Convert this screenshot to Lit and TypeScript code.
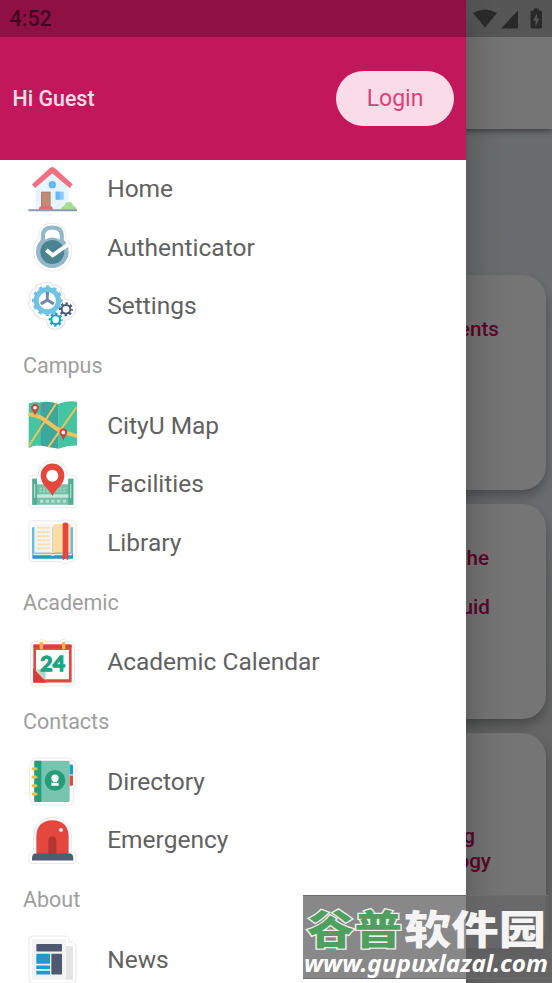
import { LitElement, css, html, svg } from "lit";
import type { SVGTemplateResult } from "lit";
import { customElement, property } from "lit/decorators.js";

type Icon = { box: string; art: SVGTemplateResult };

// a toothed wheel: solid ring plus a dashed stroke for the teeth
const gear = (x: number, y: number, r: number, hole: number, teeth: number, color: string) => {
  const body = r - 5;
  const mid = (body + hole) / 2;
  const tooth = (Math.PI * 2 * (r - 4)) / (teeth * 2);
  return svg`
    <circle cx=${x} cy=${y} r=${mid} fill="none" stroke=${color} stroke-width=${body - hole} />
    <circle cx=${x} cy=${y} r=${r - 4} fill="none" stroke=${color} stroke-width="8"
      stroke-dasharray="${tooth} ${tooth}" stroke-dashoffset=${tooth / 2} />
  `;
};

const pin = (x: number, y: number) => svg`
  <path d="M${x} ${y + 25}Q${x - 3} ${y + 15} ${x - 9} ${y + 7}A11.500 11.500 0 1 1 ${x + 9} ${y + 7}Q${x + 3} ${y + 15} ${x} ${y + 25}Z" fill="#d0433b" />
  <circle cx=${x} cy=${y} r="5.500" fill="#fff" />
`;

const icons: Record<string, Icon> = {
  home: {
    box: "38 14 147 147",
    art: svg`
      <path d="M61 71L111 29L160 71V148H61Z" fill="#e6f4fe" />
      <path d="M59 82L51 72L104 24Q111 18 118 24L171 72L163 82L111 38Z" fill="#ef7080" stroke="#ef7080" stroke-width="2" stroke-linejoin="round" />
      <circle cx="111" cy="73" r="11" fill="#62b2f5" />
      <path d="M111 62V84M100 73H122" stroke="#7dc1f8" stroke-width="1.500" />
      <rect x="77" y="94" width="29" height="46" fill="#b57c69" />
      <rect x="80" y="97" width="23" height="42" fill="#c28b75" />
      <rect x="121" y="94" width="24" height="24" fill="#8cc9fa" />
      <path d="M121 94H133V118H121Z" fill="#6ab7f8" />
      <path d="M71 148V143Q72 138 78 138H105Q111 138 112 143V148Z" fill="#e9677a" />
      <path d="M137 148Q137 137 147 137Q150 124 162 125Q172 125 173 136Q183 138 184 148Z" fill="#a3de91" />
      <path d="M39 147H185V153H39Z" fill="#8d98ad" />
    `,
  },
  lock: {
    box: "38 190 147 147",
    art: svg`
      <path d="M71 233V222Q74 191 111 190Q148 191 151 222V235Q169 248 169 276Q166 331 111 334Q56 331 55 276Q56 247 71 233Z" fill="#fff" stroke="#ebebeb" stroke-width="3" />
      <path d="M83 243V226Q84 204 111 204Q138 204 139 226V243" fill="none" stroke="#94b8cb" stroke-width="13" />
      <circle cx="111" cy="276" r="49" fill="#94b8cb" />
      <path d="M89 240V229Q91 210 111 210Q131 210 133 229V240Q111 227 89 240Z" fill="#fff" />
      <circle cx="111" cy="277" r="36" fill="#4c8390" />
      <path d="M93 271L112 287L159 254" fill="none" stroke="#fff" stroke-width="12" />
    `,
  },
  gears: {
    box: "38 365 147 147",
    art: svg`
      <g fill="#fff" stroke="#e7e7e7" stroke-width="4" stroke-linejoin="round">
        <path d="M84 370L94 366L108 368L113 375L123 374L137 384L137 394L147 402L149 417L165 420L180 433L182 449L177 462L163 475L148 480L147 492L136 503L121 508L105 504L95 493L93 476L77 475L58 463L54 450L43 443L40 428L46 418L41 406L48 391L59 386L63 375L75 371Z" />
      </g>
      ${gear(96, 421, 46, 26, 12, "#72c2e2")}
      <path d="M91 395H101L100 416L118 427L113 435L96 424L79 435L74 427L92 416Z" fill="#7288ab" />
      ${gear(152, 447, 21, 10, 8, "#4e5a73")}
      ${gear(121, 478, 21, 10, 8, "#1d9bc9")}
    `,
  },
  map: {
    box: "38 18.750 147 147",
    art: svg`
      <path d="M40 26Q58 18 76 24V154Q58 149 40 160Z" fill="#45c4a1" />
      <path d="M75 23Q102 18 130 28V162Q102 158 75 152Z" fill="#3ca79a" />
      <path d="M129 28Q154 16 185 21V152Q158 151 129 162Z" fill="#45c4a1" />
      <path d="M40 58L68 65Q78 68 86 75L124 102Q134 109 145 112L185 124" fill="none" stroke="#f3c25a" stroke-width="12" />
      <path d="M124 24L41 153M184 37L99 157" fill="none" stroke="#f3c25a" stroke-width="6" />
      ${pin(59, 39)}${pin(144, 113)}
    `,
  },
  facilities: {
    box: "38 194 147 147",
    art: svg`
      <path d="M52 240H68Q69 197 112 196Q155 197 156 240H171Q182 240 182 251V327Q182 337 172 337H51Q41 337 41 327V251Q41 240 52 240Z" fill="#fff" stroke="#e9e9e9" stroke-width="3" />
      <path d="M51 250H65V267H159V250H174V328H51Z" fill="#75c2a8" />
      <path d="M51 250H65V328H51ZM159 250H174V328H159Z" fill="#54ac91" />
      <path d="M58 266V308M166 266V308" stroke="#b0dccd" stroke-width="4" />
      <path d="M73 279H152M73 288H152" stroke="#a3d5c5" stroke-width="5" stroke-dasharray="6 4" />
      <path d="M65 302H159" stroke="#c4e6dc" stroke-width="10" />
      <path d="M74 318H155" stroke="#b8dfd3" stroke-width="9" stroke-dasharray="10 7" />
      <path d="M111 302Q106 290 88 271Q76 258 76 240A35.500 35.500 0 0 1 147 240Q147 258 135 271Q116 290 111 302Z" fill="#e4473e" />
      <circle cx="111" cy="241" r="18" fill="#fff" />
    `,
  },
  library: {
    box: "38 369.700 147 147",
    art: svg`
      <path d="M51 378H133Q150 371 167 378Q182 379 182 391V489Q182 501 166 502Q150 511 134 501H51Q41 499 41 489V390Q41 379 51 378Z" fill="#fff" stroke="#e8e8e8" stroke-width="3" />
      <path d="M51 398H173V492H51Z" fill="#1d9bcb" />
      <path d="M51 398H58V480H51ZM166 398H173V480H166Z" fill="#62c2df" />
      <path d="M57 388H107Q112 389 112 395V477Q110 474 105 474H57Z" fill="#f4f4f3" />
      <path d="M112 395Q112 388 119 388H166V474H119Q114 474 112 478Z" fill="#fbdca3" />
      <path d="M54 479H107Q112 483 117 479H169" fill="none" stroke="#e4eef1" stroke-width="5" />
      <path d="M65 399H103M65 412H103M65 424H103M65 437H103M65 449H103M65 461H103" stroke="#fbdca7" stroke-width="5" stroke-dasharray="13 2 9 2 12 0" />
      <path d="M142 386Q150 381 159 386V497L150 491L142 497Z" fill="#e4473e" />
    `,
  },
  calendar: {
    box: "38 23.250 147 147",
    art: svg`
      <path d="M58 34H68Q72 25 82 27L89 34H134Q138 25 149 27L156 34H165Q178 35 178 47V156Q178 167 166 167H57Q46 167 46 156V46Q47 35 58 34Z" fill="#fff" stroke="#e8e8e8" stroke-width="3" />
      <rect x="54" y="42" width="115" height="115" rx="3" fill="#e4473e" />
      <rect x="62" y="59" width="99" height="88" fill="#fff" />
      <path d="M54 47H169V51H54Z" fill="#cf3f37" />
      <path d="M73 35H83V55Q78 61 73 55ZM140 35H150V55Q145 61 140 55Z" fill="#f8bc42" />
      <path d="M61 118L91 118V151Z" fill="#a9d9ca" />
      <text class="day" x="112" y="122" text-anchor="middle" textLength="74" lengthAdjust="spacingAndGlyphs">24</text>
      <path d="M54 113L92 153V157H54Z" fill="#e4473e" />
      <path d="M54 118L91 157H54Z" fill="#d83c35" />
    `,
  },
  directory: {
    box: "38 21.750 147 147",
    art: svg`
      <path d="M60 25H162L173 35Q182 38 182 50V105L174 117V154Q172 166 160 166H60Q46 164 46 150Q40 142 42 133V55Q40 46 47 42Q47 27 60 25Z" fill="#fff" stroke="#e8e8e8" stroke-width="3" />
      <rect x="57" y="33" width="106" height="124" rx="4" fill="#79c4ae" />
      <path d="M60 33H78V157H60Q57 157 57 154V36Q57 33 60 33Z" fill="#239e79" />
      <path d="M163 44H169Q173 44 173 48V74H163Z" fill="#1d9bcb" />
      <path d="M163 77H173V104Q173 108 169 108H163Z" fill="#e4473e" />
      <path d="M53 57H62M53 82H62M53 108H62M53 133H62" stroke="#f8bc42" stroke-width="9" stroke-linecap="round" />
      <circle cx="119" cy="92" r="31" fill="#239e79" />
      <circle cx="119" cy="85" r="11" fill="#fff" />
      <path d="M113 91H125V97H113ZM108 99H130V108H108Z" fill="#fff" />
    `,
  },
  emergency: {
    box: "38 197.250 147 147",
    art: svg`
      <path d="M55 303V260Q56 203 111 202Q167 203 168 260V303Q182 305 182 320V331Q181 340 172 340H51Q41 340 41 331V320Q41 306 55 303Z" fill="#fff" stroke="#e8e8e8" stroke-width="3" />
      <path d="M63 311V259Q64 211 111 210Q159 211 160 259V311Z" fill="#e4473e" />
      <path d="M99 311V271Q100 259 111 259Q122 259 123 271V311Z" fill="#b33730" />
      <circle cx="137" cy="239" r="5.500" fill="#fff" />
      <path d="M57 310H166Q174 313 174 325V331H50V325Q50 313 57 310Z" fill="#4e5d73" />
    `,
  },
  news: {
    box: "38 555.750 147 147",
    art: svg`
      <path d="M51 559H151Q161 560 162 577H171Q182 579 182 591V690Q181 700 171 700H51Q41 700 41 690V570Q41 560 51 559Z" fill="#fff" stroke="#e8e8e8" stroke-width="3" />
      <rect x="50" y="568" width="102" height="122" rx="3" fill="#f3f3f3" />
      <rect x="152" y="589" width="21" height="101" fill="#e4e4e4" />
      <rect x="63" y="583" width="77" height="22" rx="2" fill="#4e5a72" />
      <rect x="108" y="612" width="32" height="62" rx="2" fill="#4e5a72" />
      <path d="M63 612H104V642H63ZM63 647H104V658H63ZM63 663H104V674H63Z" fill="#1d9bcb" />
    `,
  },
};

const menu = [
  {
    title: "",
    items: [
      { icon: "home", label: "Home" },
      { icon: "lock", label: "Authenticator" },
      { icon: "gears", label: "Settings" },
    ],
  },
  {
    title: "Campus",
    items: [
      { icon: "map", label: "CityU Map" },
      { icon: "facilities", label: "Facilities" },
      { icon: "library", label: "Library" },
    ],
  },
  {
    title: "Academic",
    items: [{ icon: "calendar", label: "Academic Calendar" }],
  },
  {
    title: "Contacts",
    items: [
      { icon: "directory", label: "Directory" },
      { icon: "emergency", label: "Emergency" },
    ],
  },
  {
    title: "About",
    items: [{ icon: "news", label: "News" }],
  },
];

// inset is the gap between the end of a line and the card's right edge
const cards = [
  { top: 42, lines: [{ text: "ents", inset: 47 }] },
  {
    top: 42,
    lines: [
      { text: "he", inset: 57 },
      { text: "", inset: 0 },
      { text: "uid", inset: 56 },
    ],
  },
  {
    top: 91,
    lines: [
      { text: "g", inset: 71 },
      { text: "ogy", inset: 55 },
    ],
  },
];

@customElement("menu-item")
export class MenuItem extends LitElement {
  @property() icon = "home";
  @property() label = "";

  static styles = css`
    :host {
      display: flex;
      align-items: center;
      height: 58.5px;
      padding-left: 27.67px;
      gap: 30.5px;
    }

    svg {
      flex: none;
      width: 49px;
      height: 49px;
    }

    .day {
      font: 700 65px Lato, sans-serif;
      fill: #20a37e;
      stroke: #20a37e;
      stroke-width: 4px;
    }

    .label {
      padding-bottom: 0.8px;
      font-size: 24.5px;
      color: #616161;
      white-space: nowrap;
    }
  `;

  render() {
    const { box, art } = icons[this.icon];
    return html`
      <svg viewBox=${box}>${art}</svg>
      <span class="label">${this.label}</span>
    `;
  }
}

@customElement("nav-drawer")
export class NavDrawer extends LitElement {
  static styles = css`
    :host {
      display: block;
      background: #fff;
      box-shadow: 0 12px 40px rgba(0, 0, 0, 0.3);
    }

    header {
      box-sizing: border-box;
      display: flex;
      align-items: center;
      justify-content: space-between;
      height: 160px;
      padding: 37px 12px 0 12.5px;
      background: #c2185b;
    }

    .user {
      font-size: 21.4px;
      font-weight: 500;
      color: #fadce8;
    }

    button {
      width: 118px;
      height: 55px;
      padding: 0;
      border: 0;
      border-radius: 27.5px;
      background: #fadce8;
      color: #d5437b;
      font: 400 23px Roboto, sans-serif;
    }

    h2 {
      box-sizing: border-box;
      display: flex;
      align-items: center;
      height: 61px;
      margin: 0;
      padding: 0 0 0.5px 23px;
      font-size: 21.5px;
      font-weight: 400;
      color: #9e9e9e;
    }
  `;

  render() {
    return html`
      <header>
        <span class="user">Hi Guest</span>
        <button>Login</button>
      </header>
      <nav>
        ${menu.map(
          (group) => html`
            ${group.title ? html`<h2>${group.title}</h2>` : ""}
            ${group.items.map(
              (item) => html`<menu-item icon=${item.icon} label=${item.label}></menu-item>`,
            )}
          `,
        )}
      </nav>
    `;
  }
}

@customElement("app-root")
export class AppRoot extends LitElement {
  static styles = css`
    :host {
      display: block;
      position: relative;
      width: 552px;
      height: 983px;
      overflow: hidden;
      font-family: Roboto, sans-serif;
    }

    .page {
      height: 100%;
      background: linear-gradient(170deg, #e5ebee 10%, #e9f0f3 50%, #ddd 78%, #ddd);
    }

    .appbar {
      position: relative;
      height: 129px;
      background: #fff;
      box-shadow: 0 2px 6px rgba(0, 0, 0, 0.45);
    }

    .cards {
      display: flex;
      flex-direction: column;
      align-items: flex-end;
      gap: 14px;
      padding: 146px 6px 0 0;
    }

    .card {
      box-sizing: border-box;
      flex: none;
      width: 263px;
      height: 215px;
      border-radius: 24px;
      background: #fff;
      box-shadow: 0 6px 12px rgba(0, 0, 0, 0.3);
      text-align: right;
      font-size: 20.7px;
      font-weight: 500;
      line-height: 24.5px;
      color: #c90b58;
    }

    .line {
      height: 24.5px;
    }

    .scrim {
      position: absolute;
      inset: 0;
      background: rgba(0, 0, 0, 0.54);
    }

    nav-drawer {
      position: absolute;
      top: 0;
      left: 0;
      width: 466px;
      height: 983px;
    }

    .status {
      position: absolute;
      top: 0;
      left: 0;
      box-sizing: border-box;
      display: flex;
      align-items: center;
      justify-content: space-between;
      width: 552px;
      height: 37px;
      padding: 0 9px 0 9.5px;
      background: rgba(0, 0, 0, 0.26);
      font-size: 21.5px;
      font-weight: 500;
      color: #41061f;
    }

    .status svg {
      width: 71px;
      height: 22px;
      fill: #292929;
    }

    .watermark {
      position: absolute;
      left: 303px;
      top: 895px;
      width: 247px;
      height: 88px;
      overflow: visible;
    }

    .name {
      font: 900 40px "Noto Sans CJK SC", sans-serif;
      fill: #f4f4f4;
    }

    .green {
      fill: #4fa05e;
      stroke: #f0f0f0;
      stroke-width: 2.5px;
      paint-order: stroke;
    }

    .url {
      font: italic 700 24px "Noto Sans", sans-serif;
      fill: #fff;
    }
  `;

  render() {
    return html`
      <div class="page">
        <div class="appbar"></div>
        <div class="cards">
          ${cards.map(
            (card) => html`
              <div class="card" style="padding-top:${card.top}px">
                ${card.lines.map(
                  (line) =>
                    html`<div class="line" style="padding-right:${line.inset}px">${line.text}</div>`,
                )}
              </div>
            `,
          )}
        </div>
      </div>
      <div class="scrim"></div>
      <nav-drawer></nav-drawer>
      <div class="status">
        <span>4:52</span>
        <svg viewBox="472 7.500 71 22">
          <path d="M473 12.500Q485 5.500 497 12.500L485 27Z" />
          <path d="M518 10V28H501Z" />
          <path
            fill-rule="evenodd"
            d="M534 8H538.500V10H540.500Q542 10 542 11.500V26.500Q542 28 540.500 28H532Q530.500 28 530.500 26.500V11.500Q530.500 10 532 10H534ZM537 13L533 20H535.500V26L539.500 18H537Z"
          />
        </svg>
      </div>
      <svg class="watermark" viewBox="0 0 247 88">
        <rect width="246" height="84" fill="rgb(100,100,100)" fill-opacity="0.77" />
        <path d="M0 0.500H246M0 83.500H246" stroke="#6c6c6c" />
        <text class="name green" x="4" y="49" textLength="95" lengthAdjust="spacingAndGlyphs">谷普</text>
        <text class="name" x="101" y="49" textLength="142" lengthAdjust="spacingAndGlyphs">软件园</text>
        <text class="url" x="1" y="77" textLength="244" lengthAdjust="spacingAndGlyphs">www.gupuxlazal.com</text>
      </svg>
    `;
  }
}
